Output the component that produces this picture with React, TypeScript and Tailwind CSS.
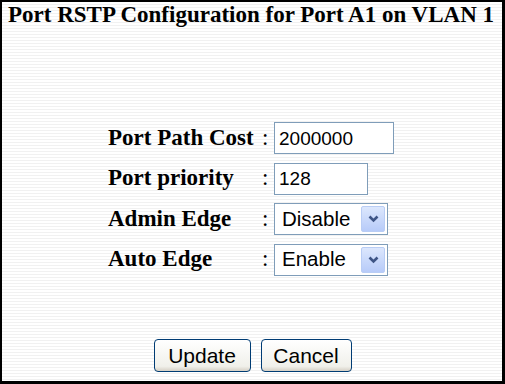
import React from 'react';

const SERIF = "font-['Liberation_Serif','Times_New_Roman',serif]";
const SANS = "font-['Liberation_Sans',Arial,sans-serif]";

function Chevron() {
  return (
    <svg width="11" height="8" viewBox="0 0 11 8">
      <path d="M1.5 1.5 L5.5 5.5 L9.5 1.5" fill="none" stroke="#3e5586" strokeWidth="2.6" />
    </svg>
  );
}

function FakeSelect({ value }: { value: string }) {
  return (
    <div className={`flex items-center h-[32px] w-[114px] border border-[#7f9db9] bg-white pl-[7px] pr-[2px] ${SANS}`}>
      <span className="flex-1 text-[20.5px] leading-none text-black">{value}</span>
      <span className="flex items-center justify-center w-[24px] h-[26px] rounded-[2px] border border-[#b9cdf5] bg-[linear-gradient(to_bottom,#dce7fd,#b7cbf9)]">
        <Chevron />
      </span>
    </div>
  );
}

function TextBox({ value, width }: { value: string; width: string }) {
  return (
    <div className={`flex items-center h-[32px] ${width} border border-[#7f9db9] bg-white pl-[4px] ${SANS}`}>
      <span className="text-[19px] leading-none text-black">{value}</span>
    </div>
  );
}

function Row({ label, children }: { label: string; children: React.ReactNode }) {
  return (
    <div className="flex items-center h-[32px]">
      <span className={`w-[154px] text-[23px] font-bold text-black ${SERIF}`}>{label}</span>
      <span className={`w-[12px] text-[23px] text-black ${SERIF}`}>:</span>
      {children}
    </div>
  );
}

function XpButton({ label, width }: { label: string; width: string }) {
  return (
    <button
      className={`h-[33px] ${width} rounded-[4px] border border-[#003c74] bg-[linear-gradient(to_bottom,#ffffff,#f0f0ea_85%,#d6d0c5)] text-[21px] leading-none text-black ${SANS}`}
    >
      {label}
    </button>
  );
}

export default function App() {
  return (
    <div className="w-[505px] h-[384px] box-border border-t-2 border-l-2 border-b-[3px] border-r-[3px] border-black bg-[repeating-linear-gradient(to_bottom,#ffffff_0px,#ffffff_2px,#f1f1f1_2px,#f1f1f1_3px)] flex flex-col">
      <h1 className={`pl-[6px] text-[23px] font-bold leading-[26px] text-black ${SERIF}`}>
        Port RSTP Configuration for Port A1 on VLAN 1
      </h1>

      <div className="mt-[94px] pl-[106px] flex flex-col gap-[8.5px]">
        <Row label="Port Path Cost">
          <TextBox value="2000000" width="w-[120px]" />
        </Row>
        <Row label="Port priority">
          <TextBox value="128" width="w-[94px]" />
        </Row>
        <Row label="Admin Edge">
          <FakeSelect value="Disable" />
        </Row>
        <Row label="Auto Edge">
          <FakeSelect value="Enable" />
        </Row>
      </div>

      <div className="mt-[63px] flex justify-center gap-[10px] pl-[1px]">
        <XpButton label="Update" width="w-[97px]" />
        <XpButton label="Cancel" width="w-[91px]" />
      </div>
    </div>
  );
}
